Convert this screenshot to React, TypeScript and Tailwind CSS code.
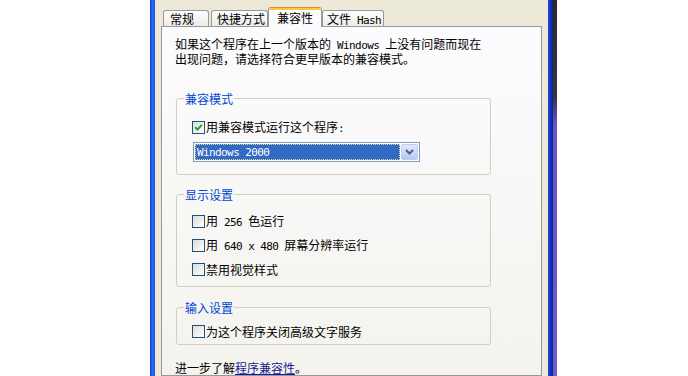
import type { ReactNode } from "react";

const cjk = "font-['Noto_Sans_CJK_SC','Noto_Sans_CJK_JP',sans-serif] text-[12px] leading-[13px] text-black";

function Latin({ children }: { children: ReactNode }) {
  return (
    <span className="font-['DejaVu_Sans_Mono',monospace] text-[11px] tracking-[-0.6px]">
      {children}
    </span>
  );
}

function Checkbox({ checked }: { checked?: boolean }) {
  return (
    <span className="flex h-[13px] w-[13px] shrink-0 items-center justify-center border border-[#1c5180] bg-gradient-to-br from-[#dcdcd7] to-white">
      {checked && (
        <svg width="9" height="9" viewBox="0 0 9 9">
          <path d="M1.2 4.2 L3.5 6.6 L7.8 1.8" fill="none" stroke="#21a121" strokeWidth="2" />
        </svg>
      )}
    </span>
  );
}

function CheckRow({ checked, className, children }: { checked?: boolean; className: string; children: ReactNode }) {
  return (
    <div className={"flex h-[13px] items-center pl-[15px] " + className}>
      <Checkbox checked={checked} />
      <span className="ml-[1px] whitespace-pre">{children}</span>
    </div>
  );
}

function Group({ title, className, children }: { title: string; className: string; children: ReactNode }) {
  return (
    <fieldset className={"ml-[1px] w-[315px] rounded-[3px] border border-[#d0d0bf] " + className}>
      <legend className="ml-[7px] px-[1px] text-[#0046d5]">{title}</legend>
      {children}
    </fieldset>
  );
}

function Tab({ label, width, pad }: { label: ReactNode; width: string; pad: string }) {
  return (
    <div
      className={
        "h-[16px] shrink-0 whitespace-pre rounded-t-[3px] border border-b-0 border-[#919b9c] bg-gradient-to-b from-white to-[#ecebe6] pt-[1px] " +
        width +
        " " +
        pad
      }
    >
      {label}
    </div>
  );
}

export default function App() {
  return (
    <div className={"flex h-[376px] w-[688px] overflow-hidden bg-white " + cjk}>
      <div className="w-[150px] shrink-0" />

      {/* window frame left */}
      <div className="w-[5px] shrink-0 bg-gradient-to-r from-[#0a3bd9] via-[#2d6af0] to-[#1a54e2]" />

      {/* dialog body */}
      <div className="flex w-[393px] shrink-0 flex-col bg-[#ece9d8]">
        {/* tabs */}
        <div className="flex h-[26px] shrink-0 items-end pl-[8px] pt-[7px]">
          <Tab label="常规" width="w-[46px]" pad="pl-[6px]" />
          <div className="w-[2px]" />
          <Tab label="快捷方式" width="w-[57px]" pad="pl-[5px]" />
          <div className="relative z-10 -mb-[1px] h-[20px] w-[54px] shrink-0 rounded-t-[3px] border border-b-0 border-x-[#919b9c] border-t-[#e68b2c] bg-[#fcfcfe]">
            <div className="h-[2px] rounded-t-[2px] bg-[#ffc83c]" />
            <div className="pl-[8px] pt-[1px]">兼容性</div>
          </div>
          <Tab
            label={
              <>
                文件<Latin>{" Hash"}</Latin>
              </>
            }
            width="w-[62px]"
            pad="pl-[4px]"
          />
        </div>

        {/* tab panel */}
        <div className="ml-[6px] flex w-[381px] flex-1 flex-col border border-[#919b9c] bg-gradient-to-b from-[#fcfcfe] to-[#f4f3ee] pl-[13px] pt-[10px]">
          <div className="whitespace-pre">
            如果这个程序在上一个版本的<Latin>{" Windows "}</Latin>上没有问题而现在
          </div>
          <div>出现问题，请选择符合更早版本的兼容模式。</div>

          <Group title="兼容模式" className="mt-[27px] pb-[12px]">
            <CheckRow checked className="mt-[16px]">
              用兼容模式运行这个程序<Latin>:</Latin>
            </CheckRow>
            <div className="ml-[16px] mt-[8px] flex h-[20px] w-[227px] border border-[#7f9db9] bg-white p-[1px]">
              <div className="flex flex-1 items-center border border-dotted border-[#e8d48a] bg-[#316ac5] pl-[1px] text-white">
                <Latin>Windows 2000</Latin>
              </div>
              <div className="ml-[1px] flex w-[17px] items-center justify-center rounded-[2px] border border-[#b9cdf8] bg-gradient-to-b from-[#e1e9fd] to-[#b4c9f8]">
                <svg width="9" height="6" viewBox="0 0 9 6">
                  <path d="M1 1 L4.5 4.5 L8 1" fill="none" stroke="#4d6185" strokeWidth="2" />
                </svg>
              </div>
            </div>
          </Group>

          <Group title="显示设置" className="mt-[13px] pb-[10px]">
            <CheckRow className="mt-[14px]">
              用<Latin>{" 256 "}</Latin>色运行
            </CheckRow>
            <CheckRow className="mt-[11px]">
              用<Latin>{" 640 x 480 "}</Latin>屏幕分辨率运行
            </CheckRow>
            <CheckRow className="mt-[11px]">禁用视觉样式</CheckRow>
          </Group>

          <Group title="输入设置" className="mt-[14px] pb-[6px]">
            <CheckRow className="mt-[11px]">为这个程序关闭高级文字服务</CheckRow>
          </Group>

          <div className="mt-[16px]">
            进一步了解<span className="text-[#1b1b93] underline">程序兼容性</span>。
          </div>
        </div>
      </div>

      {/* window frame right */}
      <div className="w-[5px] shrink-0 bg-gradient-to-r from-[#1c4ad6] to-[#0a2199]" />

      {/* desktop strip */}
      <div className="w-[4px] shrink-0 bg-[linear-gradient(to_bottom,#2f2a25_0%,#3c3242_26%,#6a52c8_33%,#7259cc_100%)]" />

      <div className="flex-1" />
    </div>
  );
}
